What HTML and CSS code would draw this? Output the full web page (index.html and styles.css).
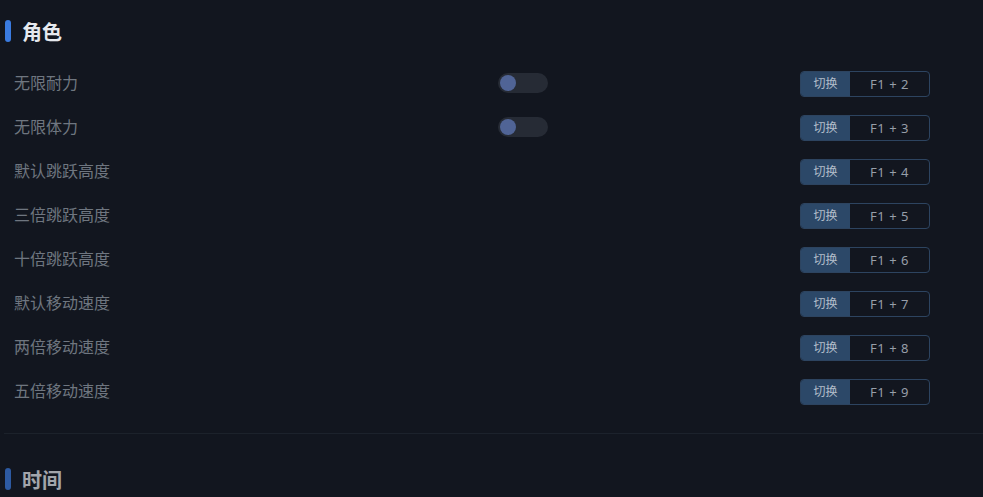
FILE: index.html
```html
<!DOCTYPE html>
<html lang="zh-CN">
<head>
    <meta charset="UTF-8">
    <meta name="viewport" content="width=device-width, initial-scale=1.0">
    <title>修改器</title>
    <link rel="stylesheet" href="styles.css">
</head>
<body>
    <div class="section">
        <div class="section-title"><span class="bar"></span>角色</div>
        <div class="rows">
            <div class="row">
                <span class="label">无限耐力</span>
                <span class="toggle"><span class="knob"></span></span>
                <span class="hotkey"><span class="action">切换</span><span class="keys">F1 + 2</span></span>
            </div>
            <div class="row">
                <span class="label">无限体力</span>
                <span class="toggle"><span class="knob"></span></span>
                <span class="hotkey"><span class="action">切换</span><span class="keys">F1 + 3</span></span>
            </div>
            <div class="row">
                <span class="label">默认跳跃高度</span>
                <span></span>
                <span class="hotkey"><span class="action">切换</span><span class="keys">F1 + 4</span></span>
            </div>
            <div class="row">
                <span class="label">三倍跳跃高度</span>
                <span></span>
                <span class="hotkey"><span class="action">切换</span><span class="keys">F1 + 5</span></span>
            </div>
            <div class="row">
                <span class="label">十倍跳跃高度</span>
                <span></span>
                <span class="hotkey"><span class="action">切换</span><span class="keys">F1 + 6</span></span>
            </div>
            <div class="row">
                <span class="label">默认移动速度</span>
                <span></span>
                <span class="hotkey"><span class="action">切换</span><span class="keys">F1 + 7</span></span>
            </div>
            <div class="row">
                <span class="label">两倍移动速度</span>
                <span></span>
                <span class="hotkey"><span class="action">切换</span><span class="keys">F1 + 8</span></span>
            </div>
            <div class="row">
                <span class="label">五倍移动速度</span>
                <span></span>
                <span class="hotkey"><span class="action">切换</span><span class="keys">F1 + 9</span></span>
            </div>
        </div>
    </div>
    <div class="section next">
        <div class="section-title"><span class="bar"></span>时间</div>
    </div>
</body>
</html>
```

FILE: styles.css
```css
body {
    margin: 0;
    background-color: #12161f;
    font-family: "Noto Sans", "Noto Sans CJK SC", sans-serif;
    color: #6f7680;
    overflow: hidden;
}
.section {
    padding: 20px 0 0 5px;
}
.section.next {
    margin: 0 0 0 4px;
    padding: 34px 0 0 1px;
    border-top: 1px solid #222832;
    opacity: 0.68;
}
.section-title {
    display: flex;
    align-items: center;
    gap: 11px;
    height: 22px;
    font-size: 20px;
    font-weight: bold;
    color: #e6e9ee;
}
.bar {
    width: 6px;
    height: 22px;
    border-radius: 3px;
    background-color: #3a7be0;
}
.rows {
    padding: 19px 0 20px 9px;
}
.row {
    display: grid;
    grid-template-columns: 484px 302px 130px;
    align-items: center;
    height: 44px;
}
.label {
    font-size: 16px;
    line-height: 20px;
    margin-bottom: 1px;
}
.toggle {
    display: flex;
    align-items: center;
    width: 50px;
    height: 20px;
    padding: 0 2px;
    box-sizing: border-box;
    border-radius: 10px;
    background-color: #262b35;
}
.knob {
    width: 16px;
    height: 16px;
    border-radius: 50%;
    background-color: #506496;
}
.hotkey {
    display: flex;
    height: 26px;
    margin-top: 2px;
    box-sizing: border-box;
    border: 1px solid #2d4460;
    border-radius: 4px;
    overflow: hidden;
    font-size: 13px;
    line-height: 24px;
}
.action {
    width: 49px;
    font-size: 12px;
    text-align: center;
    background-color: #2c4868;
    color: #b3becb;
}
.keys {
    flex: 1;
    text-align: center;
    color: #979ea8;
    letter-spacing: 0.5px;
}
```
